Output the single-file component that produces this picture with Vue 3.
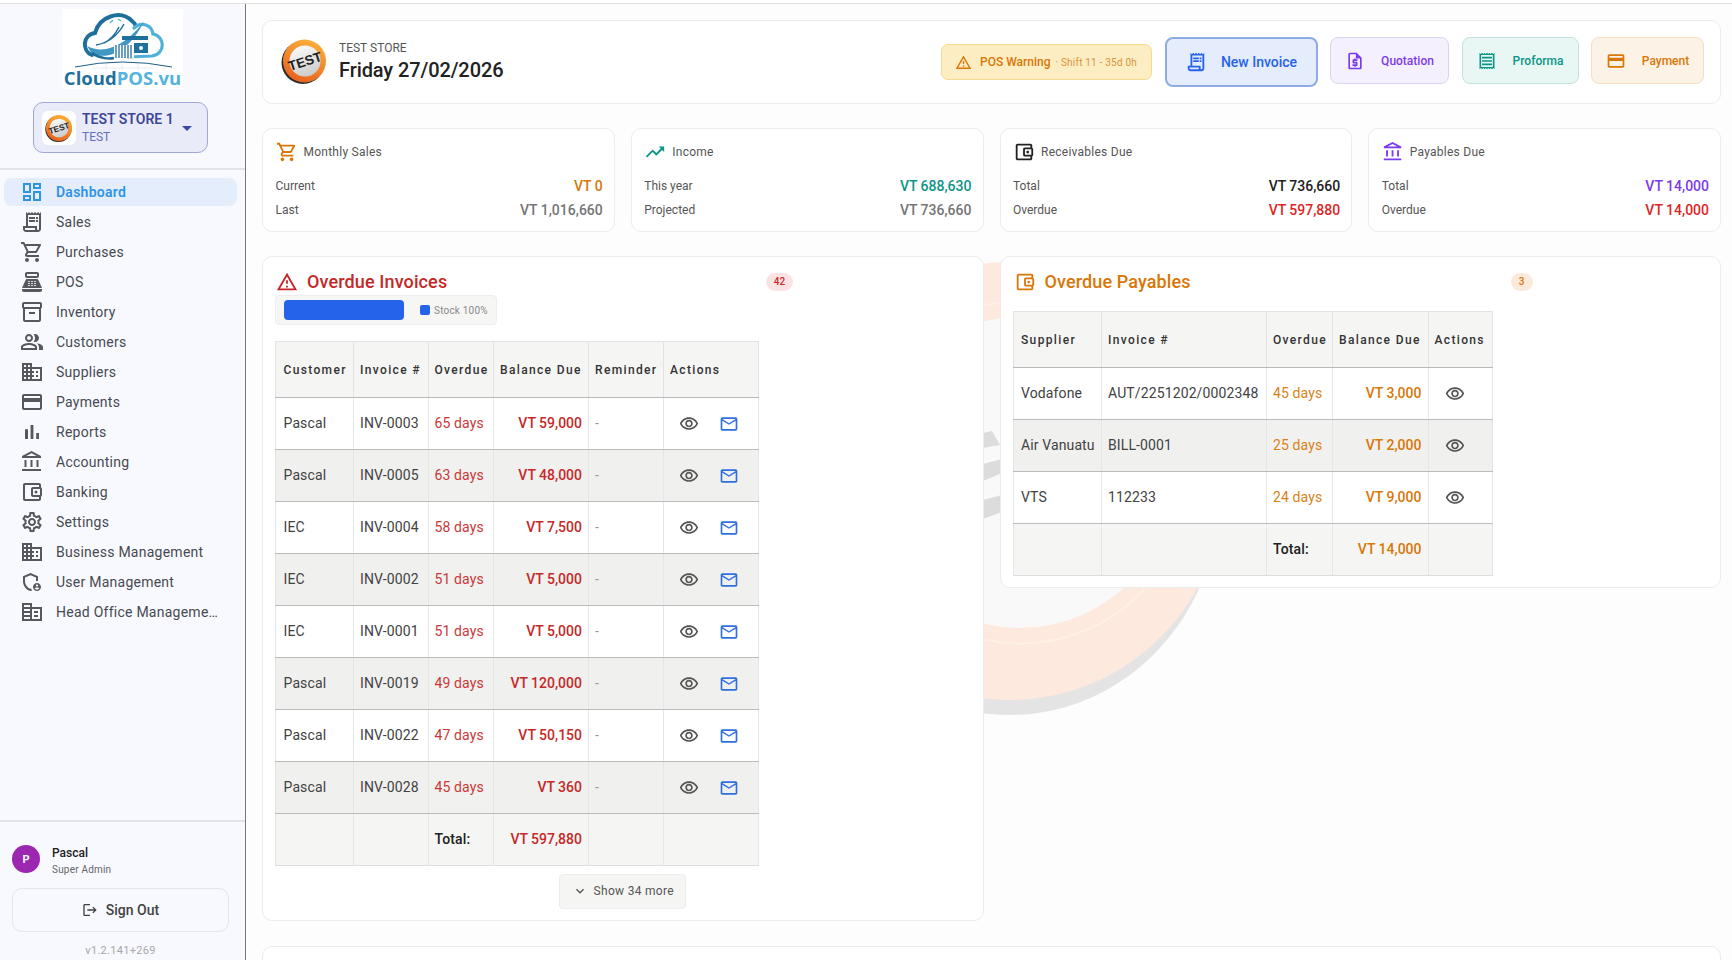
<template>
  <div class="page">
    <div class="top-strip"></div>
    <div class="shell">
      <!-- Sidebar -->
      <aside class="sidebar">
        <div class="brand">
          <div class="brand-box">
            <svg class="brand-logo" viewBox="0 0 121 62">
              <path d="M30 46C20 42 20 26 33 24C37 8 58 0 70 12C72 13.500 73 15 74 17" fill="none" stroke="#1f6f9c" stroke-width="4" stroke-linecap="round" />
              <path d="M72 19C79 12 90 16 91 25C103 27 104 45 90 47L66 48" fill="none" stroke="#4fb2d9" stroke-width="3.200" stroke-linecap="round" />
              <path d="M25 37C44 47 66 34 82 12C70 38 50 52 30 45Z" fill="#3f97c4" />
              <path d="M34 36C46 34 56 26 62 15M42 34C50 30 54 24 57 18" fill="none" stroke="#1f6f9c" stroke-width="1.500" />
              <path d="M48 14l3-3M56 10l3 2" fill="none" stroke="#4fb2d9" stroke-width="1.200" />
              <path d="M30 44C38 50 48 50 52 49" fill="none" stroke="#1f6f9c" stroke-width="2.400" />
              <rect x="60" y="27" width="26" height="4" fill="#1f6f9c" />
              <rect x="52" y="36" width="20" height="13" fill="#fff" />
              <path d="M54 36v13M57 36v13M60 36v13M63 36v13M66 36v13M69 36v13" stroke="#1f6f9c" stroke-width="1.300" />
              <rect x="72" y="34" width="14" height="10" fill="#1f6f9c" />
              <circle cx="79" cy="39" r="2" fill="#fff" />
              <path d="M13 58Q60 48 110 58" fill="none" stroke="#1f5f85" stroke-width="1" />
              <path d="M30 59H92M44 55V62M60 54V62M76 55V62" stroke="#dfe8ee" stroke-width="0.800" />
            </svg>
            <div class="brand-name"><span>Cloud</span><span class="brand-pos">POS.vu</span></div>
          </div>
        </div>

        <div class="store-select">
          <div class="store-logo">
            <svg viewBox="0 0 48 48" class="test-logo-small">
              <defs>
                <linearGradient id="ringGrad" x1="0.700" y1="0" x2="0.300" y2="1">
                  <stop offset="0" stop-color="#fbb13a" />
                  <stop offset="1" stop-color="#e8601e" />
                </linearGradient>
                <linearGradient id="discGrad" x1="0.300" y1="0" x2="0.700" y2="1">
                  <stop offset="0" stop-color="#fbfbfb" />
                  <stop offset="1" stop-color="#c9c9c9" />
                </linearGradient>
              </defs>
              <circle cx="23" cy="25.500" r="21" fill="#2b2b2b" />
              <circle cx="24" cy="24" r="21" fill="url(#ringGrad)" />
              <circle cx="24" cy="24" r="15" fill="url(#discGrad)" />
              <text x="24" y="29" text-anchor="middle" transform="rotate(-18 24 24)" class="test-text">TEST</text>
            </svg>
          </div>
          <div class="store-names">
            <div class="store-name">TEST STORE 1</div>
            <div class="store-sub">TEST</div>
          </div>
          <svg class="store-arrow" viewBox="0 0 24 24"><path d="M6 9.500l6 6 6-6z" /></svg>
        </div>

        <nav class="nav">
          <a v-for="item in navItems" :key="item.label" class="nav-item" :class="{ active: item.active }">
            <svg class="nav-icon" viewBox="0 0 24 24"><path :d="item.icon" /></svg>
            <span class="nav-label">{{ item.label }}</span>
          </a>
        </nav>

        <div class="side-footer">
          <div class="user-row">
            <div class="avatar">P</div>
            <div>
              <div class="user-name">Pascal</div>
              <div class="user-role">Super Admin</div>
            </div>
          </div>
          <button class="signout">
            <svg viewBox="0 0 24 24"><path :d="icons.logout" /></svg>
            Sign Out
          </button>
          <div class="version">v1.2.141+269</div>
        </div>
      </aside>

      <!-- Main -->
      <main class="main">
        <svg class="watermark" viewBox="0 0 480 500">
          <ellipse cx="240" cy="256" rx="210" ry="224" fill="#e4e4e4" />
          <ellipse cx="240" cy="246" rx="215" ry="219" fill="#fde9de" />
          <ellipse cx="250" cy="237.500" rx="170" ry="171" fill="none" stroke="#fef0e6" stroke-width="2" />
          <ellipse cx="250" cy="237.500" rx="155" ry="155.500" fill="#f9f9f9" />
          <polygon points="213,198 222,196 230,210 213,213" fill="#dcdcdc" />
          <polygon points="213,229 232,224 232,238 213,246" fill="#dcdcdc" />
          <polygon points="213,265 232,260 232,277 213,284" fill="#dcdcdc" />
        </svg>

        <section class="card head-card">
          <div class="head-left">
            <svg viewBox="0 0 48 48" class="test-logo">
              <circle cx="23" cy="25.500" r="21.500" fill="#2b2b2b" />
              <circle cx="24.500" cy="24" r="21.500" fill="url(#ringGrad)" />
              <circle cx="25" cy="24" r="15.500" fill="url(#discGrad)" />
              <text x="25" y="29" text-anchor="middle" transform="rotate(-18 25 24)" class="test-text">TEST</text>
            </svg>
            <div>
              <div class="head-store">TEST STORE</div>
              <div class="head-date">Friday 27/02/2026</div>
            </div>
          </div>
          <div class="head-actions">
            <div class="pos-warning">
              <svg viewBox="0 0 24 24"><path :d="icons.warning" /></svg>
              <span class="pos-title">POS Warning</span>
              <span class="pos-sub">· Shift 11 - 35d 0h</span>
            </div>
            <button class="action primary">
              <svg viewBox="0 0 24 24"><path :d="icons.receiptLong" /></svg>
              New Invoice
            </button>
            <button class="action quotation">
              <svg viewBox="0 0 24 24"><path :d="icons.quote" /></svg>
              Quotation
            </button>
            <button class="action proforma">
              <svg viewBox="0 0 24 24"><path :d="icons.receipt" /></svg>
              Proforma
            </button>
            <button class="action payment">
              <svg viewBox="0 0 24 24"><path :d="icons.card" /></svg>
              Payment
            </button>
          </div>
        </section>

        <section class="stats">
          <div v-for="s in stats" :key="s.title" class="card stat">
            <div class="stat-head">
              <svg :style="{ fill: s.color }" viewBox="0 0 24 24"><path :d="s.icon" /></svg>
              <span>{{ s.title }}</span>
            </div>
            <div class="stat-row">
              <span>{{ s.label1 }}</span>
              <b :style="{ color: s.color1 }">{{ s.value1 }}</b>
            </div>
            <div class="stat-row">
              <span>{{ s.label2 }}</span>
              <b :style="{ color: s.color2 }">{{ s.value2 }}</b>
            </div>
          </div>
        </section>

        <section class="lists">
          <!-- Overdue invoices -->
          <div class="card list-card invoices">
            <div class="list-head">
              <svg class="red" viewBox="0 0 24 24"><path :d="icons.warning" /></svg>
              <h2 class="red">Overdue Invoices</h2>
              <span class="badge badge-red">42</span>
            </div>
            <div class="stock-pill">
              <div class="stock-bar"></div>
              <i class="stock-dot"></i>
              <span>Stock 100%</span>
            </div>
            <table class="inv-table">
              <colgroup>
                <col style="width: 78px" />
                <col style="width: 74.500px" />
                <col style="width: 65.500px" />
                <col style="width: 95px" />
                <col style="width: 75px" />
                <col style="width: 94.500px" />
              </colgroup>
              <thead>
                <tr>
                  <th>Customer</th>
                  <th>Invoice #</th>
                  <th>Overdue</th>
                  <th>Balance Due</th>
                  <th>Reminder</th>
                  <th>Actions</th>
                </tr>
              </thead>
              <tbody>
                <tr v-for="row in invoices" :key="row.no">
                  <td>{{ row.customer }}</td>
                  <td>{{ row.no }}</td>
                  <td class="days red">{{ row.days }}</td>
                  <td class="money red">{{ row.balance }}</td>
                  <td class="dash">-</td>
                  <td class="acts">
                    <span class="icon-btn"><svg viewBox="0 0 24 24" class="eye"><path :d="icons.eye" /></svg></span>
                    <span class="icon-btn"><svg viewBox="0 0 24 24" class="mail"><path :d="icons.mail" /></svg></span>
                  </td>
                </tr>
                <tr class="total">
                  <td></td>
                  <td></td>
                  <td class="total-label">Total:</td>
                  <td class="money red">VT 597,880</td>
                  <td></td>
                  <td></td>
                </tr>
              </tbody>
            </table>
            <div class="more-wrap">
              <button class="more">
                <svg viewBox="0 0 24 24"><path :d="icons.expand" /></svg>
                Show 34 more
              </button>
            </div>
          </div>

          <!-- Overdue payables -->
          <div class="card list-card payables">
            <div class="list-head">
              <svg class="orange" viewBox="0 0 24 24"><path :d="icons.wallet" /></svg>
              <h2 class="orange">Overdue Payables</h2>
              <span class="badge badge-orange">3</span>
            </div>
            <table class="pay-table">
              <colgroup>
                <col style="width: 88.500px" />
                <col style="width: 165px" />
                <col style="width: 66px" />
                <col style="width: 95.500px" />
                <col style="width: 64.500px" />
              </colgroup>
              <thead>
                <tr>
                  <th>Supplier</th>
                  <th>Invoice #</th>
                  <th>Overdue</th>
                  <th>Balance Due</th>
                  <th>Actions</th>
                </tr>
              </thead>
              <tbody>
                <tr v-for="row in payables" :key="row.no">
                  <td>{{ row.supplier }}</td>
                  <td>{{ row.no }}</td>
                  <td class="days orange">{{ row.days }}</td>
                  <td class="money orange">{{ row.balance }}</td>
                  <td class="acts">
                    <span class="icon-btn"><svg viewBox="0 0 24 24" class="eye"><path :d="icons.eye" /></svg></span>
                  </td>
                </tr>
                <tr class="total">
                  <td></td>
                  <td></td>
                  <td class="total-label">Total:</td>
                  <td class="money orange">VT 14,000</td>
                  <td></td>
                </tr>
              </tbody>
            </table>
          </div>
        </section>

        <section class="card next-card"></section>
      </main>
    </div>
  </div>
</template>

<script setup>
const icons = {
  dashboard: 'M19 5v2h-4V5h4M9 5v6H5V5h4m10 8v6h-4v-6h4M9 17v2H5v-2h4M21 3h-8v6h8V3zM11 3H3v10h8V3zm10 8h-8v10h8V11zm-10 4H3v6h8v-6z',
  receiptLong: 'M19.500 3.500 18 2l-1.500 1.500L15 2l-1.500 1.500L12 2l-1.500 1.500L9 2 7.500 3.500 6 2v14H3v3c0 1.660 1.340 3 3 3h12c1.660 0 3-1.340 3-3V2l-1.500 1.500zM15 20H6c-.550 0-1-.450-1-1v-1h10v2zm4-1c0 .550-.450 1-1 1s-1-.450-1-1v-3H8V5h11v14zM9 7h6v2H9zM16 7h2v2h-2zM9 10h6v2H9zM16 10h2v2h-2z',
  cart: 'M15.550 13c.750 0 1.410-.410 1.750-1.030l3.580-6.490c.370-.660-.110-1.480-.870-1.480H5.210l-.940-2H1v2h2l3.600 7.590-1.350 2.440C4.520 15.370 5.480 17 7 17h12v-2H7l1.100-2h7.450zM6.160 6h12.150l-2.760 5H8.530L6.160 6zM7 18c-1.100 0-1.990.900-1.990 2S5.900 22 7 22s2-.900 2-2-.900-2-2-2zm10 0c-1.100 0-1.990.900-1.990 2s.890 2 1.990 2 2-.900 2-2-.900-2-2-2z',
  pos: 'M17 2H7c-1.100 0-2 .900-2 2v2c0 1.100.900 2 2 2h10c1.100 0 2-.900 2-2V4c0-1.100-.900-2-2-2zm0 4H7V4h10v2zm3 16H4c-1.100 0-2-.900-2-2v-1h20v1c0 1.100-.900 2-2 2zm-1.470-11.810C18.210 9.470 17.490 9 16.700 9H7.300c-.790 0-1.510.470-1.830 1.190L2 18h20l-3.470-7.810zM9.500 16h-1c-.280 0-.500-.220-.500-.500s.220-.500.500-.500h1c.280 0 .500.220.500.500s-.220.500-.500.500zm0-2h-1c-.280 0-.500-.220-.500-.500s.220-.500.500-.500h1c.280 0 .500.220.500.500s-.220.500-.500.500zm0-2h-1c-.280 0-.500-.220-.500-.500s.220-.500.500-.500h1c.280 0 .500.220.500.500s-.220.500-.500.500zm3 4h-1c-.280 0-.500-.220-.500-.500s.220-.500.500-.500h1c.280 0 .500.220.500.500s-.220.500-.500.500zm0-2h-1c-.280 0-.500-.220-.500-.500s.220-.500.500-.500h1c.280 0 .500.220.500.500s-.220.500-.500.500zm0-2h-1c-.280 0-.500-.220-.500-.500s.220-.500.500-.500h1c.280 0 .500.220.500.500s-.220.500-.500.500zm3 4h-1c-.280 0-.500-.220-.500-.500s.220-.500.500-.500h1c.280 0 .500.220.500.500s-.220.500-.500.500zm0-2h-1c-.280 0-.500-.220-.500-.500s.220-.500.500-.500h1c.280 0 .500.220.500.500s-.220.500-.500.500zm0-2h-1c-.280 0-.500-.220-.500-.500s.220-.500.500-.500h1c.280 0 .500.220.500.500s-.220.500-.500.500z',
  inventory: 'M20 2H4c-1 0-2 .900-2 2v3.010c0 .720.430 1.340 1 1.690V20c0 1.100 1.100 2 2 2h14c.900 0 2-.900 2-2V8.700c.570-.350 1-.970 1-1.690V4c0-1.100-1-2-2-2zm-1 18H5V9h14v11zm1-13H4V4h16v3zM9 12h6v2H9z',
  people: 'M16.670 13.130C18.040 14.060 19 15.320 19 17v3h4v-3c0-2.180-3.570-3.470-6.330-3.870zM15 12c2.210 0 4-1.790 4-4s-1.790-4-4-4c-.470 0-.910.100-1.330.240C14.500 5.270 15 6.580 15 8s-.500 2.730-1.330 3.760c.420.140.860.240 1.330.240zM9 12c2.210 0 4-1.790 4-4s-1.790-4-4-4-4 1.790-4 4 1.790 4 4 4zm0-6c1.100 0 2 .900 2 2s-.900 2-2 2-2-.900-2-2 .900-2 2-2zM9 13c-2.670 0-8 1.340-8 4v3h16v-3c0-2.660-5.330-4-8-4zm6 5H3v-.990C3.200 16.290 6.300 15 9 15s5.800 1.290 6 2v1z',
  domain: 'M12 7V3H2v18h20V7H12zM6 19H4v-2h2v2zm0-4H4v-2h2v2zm0-4H4V9h2v2zm0-4H4V5h2v2zm4 12H8v-2h2v2zm0-4H8v-2h2v2zm0-4H8V9h2v2zm0-4H8V5h2v2zm10 12h-8v-2h2v-2h-2v-2h2v-2h-2V9h8v10zm-2-8h-2v2h2v-2zm0 4h-2v2h2v-2z',
  card: 'M20 4H4c-1.110 0-1.990.890-1.990 2L2 18c0 1.110.890 2 2 2h16c1.110 0 2-.890 2-2V6c0-1.110-.890-2-2-2zm0 14H4v-6h16v6zm0-10H4V6h16v2z',
  bars: 'M5 9.200h3V19H5zM10.600 5h2.800v14h-2.800zm5.600 8H19v6h-2.800z',
  bank: 'M6.500 10h-2v7h2v-7zm6 0h-2v7h2v-7zm8.500 9H2v2h19v-2zm-2.500-9h-2v7h2v-7zm-7-6.740L16.710 6H6.290l5.210-2.740m0-2.260L2 6v2h19V6l-9.500-5z',
  wallet: 'M21 7.280V5c0-1.100-.900-2-2-2H5c-1.110 0-2 .900-2 2v14c0 1.100.890 2 2 2h14c1.100 0 2-.900 2-2v-2.280c.590-.350 1-.980 1-1.720V9c0-.740-.410-1.380-1-1.720zM20 9v6h-7V9h7zM5 19V5h14v2h-6c-1.100 0-2 .900-2 2v6c0 1.100.900 2 2 2h6v2H5zM16 13.500a1.500 1.500 0 100-3 1.500 1.500 0 000 3z',
  settings: 'M19.430 12.980c.040-.320.070-.640.070-.980 0-.340-.030-.660-.070-.980l2.110-1.650c.190-.150.240-.420.120-.640l-2-3.460c-.090-.160-.260-.250-.440-.250-.060 0-.120.010-.170.030l-2.490 1c-.520-.400-1.080-.730-1.690-.980l-.380-2.650C14.460 2.180 14.250 2 14 2h-4c-.250 0-.460.180-.490.420l-.380 2.650c-.610.250-1.170.590-1.690.980l-2.490-1c-.060-.020-.120-.030-.180-.030-.170 0-.340.090-.430.250l-2 3.460c-.130.220-.070.490.120.640l2.110 1.650c-.040.320-.070.650-.070.980 0 .330.030.660.070.980l-2.110 1.650c-.190.150-.240.420-.120.640l2 3.460c.090.160.260.250.440.250.060 0 .120-.010.170-.030l2.490-1c.520.400 1.080.730 1.690.980l.380 2.650c.030.240.240.420.490.420h4c.250 0 .460-.180.490-.420l.380-2.650c.610-.250 1.170-.590 1.690-.980l2.490 1c.060.020.120.030.180.030.170 0 .340-.090.430-.250l2-3.460c.120-.220.070-.490-.120-.640l-2.110-1.650zm-1.980-1.710c.040.310.050.520.050.730 0 .210-.020.430-.050.730l-.140 1.130.890.700 1.080.840-.700 1.210-1.270-.510-1.040-.420-.900.680c-.430.320-.840.560-1.250.730l-1.060.430-.160 1.130-.200 1.350h-1.400l-.190-1.350-.160-1.130-1.060-.430c-.430-.180-.830-.410-1.230-.710l-.910-.700-1.060.430-1.270.510-.700-1.210 1.080-.840.890-.700-.140-1.130c-.030-.310-.050-.540-.050-.740s.020-.430.050-.730l.140-1.130-.890-.700-1.080-.840.700-1.210 1.270.510 1.040.420.900-.680c.430-.320.840-.560 1.250-.730l1.060-.430.160-1.130.200-1.350h1.390l.190 1.350.160 1.130 1.060.430c.430.180.830.410 1.230.710l.910.700 1.060-.430 1.270-.510.700 1.210-1.070.850-.890.700.140 1.130zM12 8c-2.210 0-4 1.790-4 4s1.790 4 4 4 4-1.790 4-4-1.790-4-4-4zm0 6c-1.100 0-2-.900-2-2s.900-2 2-2 2 .900 2 2-.900 2-2 2z',
  admin: 'M18 11.090V6.270L10.500 3 3 6.270v4.910c0 4.540 3.200 8.790 7.500 9.820.550-.130 1.080-.320 1.600-.550-.450-.620-.780-1.320-.950-2.070l-.650.400c-3.200-1-5.500-4.500-5.500-7.600V7.600l5.500-2.400 5.500 2.400v3.700c.660-.200 1.320-.280 2-.210zM17 13c-2.210 0-4 1.790-4 4s1.790 4 4 4 4-1.790 4-4-1.790-4-4-4zm0 1.380c.620 0 1.120.510 1.120 1.120s-.510 1.120-1.120 1.120-1.120-.510-1.120-1.120.500-1.120 1.120-1.120zm0 5.370c-.930 0-1.740-.460-2.240-1.170.050-.720 1.510-1.080 2.240-1.080s2.190.360 2.240 1.080c-.500.710-1.310 1.170-2.240 1.170z',
  office: 'M12 7V3H2v18h20V7H12zm-2 12H4v-2h6v2zm0-4H4v-2h6v2zm0-4H4V9h6v2zm0-4H4V5h6v2zm10 12h-8V9h8v10zm-2-8h-4v2h4v-2zm0 4h-4v2h4v-2z',
  warning: 'M12 5.990 19.530 19H4.470L12 5.990M12 2 1 21h22L12 2zm1 14h-2v2h2v-2zm0-6h-2v4h2v-4z',
  trend: 'M16 6l2.290 2.290-4.880 4.880-4-4L2 16.590 3.410 18l6-6 4 4 6.300-6.290L22 12V6z',
  quote: 'M14 2H6c-1.100 0-2 .900-2 2v16c0 1.100.890 2 1.990 2H18c1.100 0 2-.900 2-2V8l-6-6zM18 20H6V4h7v5h5v11zM11 19h2v-1h1c.550 0 1-.450 1-1v-3c0-.550-.450-1-1-1h-3v-1h4v-2h-2V9h-2v1h-1c-.550 0-1 .450-1 1v3c0 .550.450 1 1 1h3v1H9v2h2v1z',
  receipt: 'M19.500 3.500 18 2l-1.500 1.500L15 2l-1.500 1.500L12 2l-1.500 1.500L9 2 7.500 3.500 6 2 4.500 3.500 3 2v20l1.500-1.500L6 22l1.500-1.500L9 22l1.500-1.500L12 22l1.500-1.500L15 22l1.500-1.500L18 22l1.500-1.500L21 22V2l-1.500 1.500zM19 19.090H5V4.910h14v14.180zM6 15h12v2H6zm0-4h12v2H6zm0-4h12v2H6z',
  eye: 'M12 6c3.790 0 7.170 2.130 8.820 5.500C19.170 14.870 15.790 17 12 17s-7.170-2.130-8.820-5.500C4.830 8.130 8.210 6 12 6m0-2C7 4 2.730 7.110 1 11.500 2.730 15.890 7 19 12 19s9.270-3.110 11-7.500C21.270 7.110 17 4 12 4zm0 5c1.380 0 2.500 1.120 2.500 2.500S13.380 14 12 14s-2.500-1.120-2.500-2.500S10.620 9 12 9m0-2c-2.480 0-4.500 2.020-4.500 4.500S9.520 16 12 16s4.500-2.020 4.500-4.500S14.480 7 12 7z',
  mail: 'M22 6c0-1.100-.900-2-2-2H4c-1.100 0-2 .900-2 2v12c0 1.100.900 2 2 2h16c1.100 0 2-.900 2-2V6zm-2 0l-8 5-8-5h16zm0 12H4V8l8 5 8-5v10z',
  logout: 'M17 7l-1.410 1.410L18.170 11H8v2h10.170l-2.580 2.580L17 17l5-5zM4 5h8V3H4c-1.100 0-2 .900-2 2v14c0 1.100.900 2 2 2h8v-2H4V5z',
  expand: 'M16.590 8.590 12 13.170 7.410 8.590 6 10l6 6 6-6z',
}

const navItems = [
  { label: 'Dashboard', icon: icons.dashboard, active: true },
  { label: 'Sales', icon: icons.receiptLong },
  { label: 'Purchases', icon: icons.cart },
  { label: 'POS', icon: icons.pos },
  { label: 'Inventory', icon: icons.inventory },
  { label: 'Customers', icon: icons.people },
  { label: 'Suppliers', icon: icons.domain },
  { label: 'Payments', icon: icons.card },
  { label: 'Reports', icon: icons.bars },
  { label: 'Accounting', icon: icons.bank },
  { label: 'Banking', icon: icons.wallet },
  { label: 'Settings', icon: icons.settings },
  { label: 'Business Management', icon: icons.domain },
  { label: 'User Management', icon: icons.admin },
  { label: 'Head Office Manageme…', icon: icons.office },
]

const stats = [
  { title: 'Monthly Sales', icon: icons.cart, color: '#d97706', label1: 'Current', value1: 'VT 0', color1: '#d97706', label2: 'Last', value2: 'VT 1,016,660', color2: '#757575' },
  { title: 'Income', icon: icons.trend, color: '#0d9488', label1: 'This year', value1: 'VT 688,630', color1: '#0d9488', label2: 'Projected', value2: 'VT 736,660', color2: '#757575' },
  { title: 'Receivables Due', icon: icons.wallet, color: '#212121', label1: 'Total', value1: 'VT 736,660', color1: '#212121', label2: 'Overdue', value2: 'VT 597,880', color2: '#dc2626' },
  { title: 'Payables Due', icon: icons.bank, color: '#7c3aed', label1: 'Total', value1: 'VT 14,000', color1: '#7c3aed', label2: 'Overdue', value2: 'VT 14,000', color2: '#dc2626' },
]

const invoices = [
  { customer: 'Pascal', no: 'INV-0003', days: '65 days', balance: 'VT 59,000' },
  { customer: 'Pascal', no: 'INV-0005', days: '63 days', balance: 'VT 48,000' },
  { customer: 'IEC', no: 'INV-0004', days: '58 days', balance: 'VT 7,500' },
  { customer: 'IEC', no: 'INV-0002', days: '51 days', balance: 'VT 5,000' },
  { customer: 'IEC', no: 'INV-0001', days: '51 days', balance: 'VT 5,000' },
  { customer: 'Pascal', no: 'INV-0019', days: '49 days', balance: 'VT 120,000' },
  { customer: 'Pascal', no: 'INV-0022', days: '47 days', balance: 'VT 50,150' },
  { customer: 'Pascal', no: 'INV-0028', days: '45 days', balance: 'VT 360' },
]

const payables = [
  { supplier: 'Vodafone', no: 'AUT/2251202/0002348', days: '45 days', balance: 'VT 3,000' },
  { supplier: 'Air Vanuatu', no: 'BILL-0001', days: '25 days', balance: 'VT 2,000' },
  { supplier: 'VTS', no: '112233', days: '24 days', balance: 'VT 9,000' },
]
</script>

<style>
html,
body {
  margin: 0;
  overflow: hidden;
  background: #fff;
}
</style>

<style scoped>
.page {
  width: 1732px;
  height: 960px;
  overflow: hidden;
  font-family: Roboto, "Liberation Sans", sans-serif;
  color: #212121;
  background: #fdfdfd;
}

.top-strip {
  height: 3px;
  background: #fff;
  border-bottom: 1px solid #e0e0e0;
}

.shell {
  display: flex;
  height: 956px;
}

/* Sidebar */
.sidebar {
  width: 245px;
  flex-shrink: 0;
  display: flex;
  flex-direction: column;
  background: #f8f9ff;
  border-right: 1.500px solid #77787c;
  box-sizing: content-box;
}

.brand {
  display: flex;
  justify-content: center;
  padding-top: 5px;
}

.brand-box {
  width: 121px;
  height: 80px;
  background: #fff;
}

.brand-logo {
  width: 121px;
  height: 62px;
  display: block;
}

.brand-name {
  margin-top: -2px;
  text-align: center;
  font-family: "Open Sans", sans-serif;
  font-size: 18.500px;
  font-weight: 700;
  line-height: 18px;
  white-space: nowrap;
  color: #1f6f9c;
}

.brand-pos {
  color: #55b3dc;
}

.store-select {
  margin: 13px 37px 15px 33px;
  height: 51px;
  display: flex;
  align-items: center;
  box-sizing: border-box;
  padding: 0 8px;
  background: #e9ebf8;
  border: 1px solid #a0a8d8;
  border-radius: 10px;
}

.store-logo {
  width: 34px;
  height: 34px;
  background: #fff;
  border-radius: 6px;
  display: flex;
  align-items: center;
  justify-content: center;
  margin-right: 6px;
}

.test-logo-small {
  width: 30px;
  height: 30px;
}

.test-text {
  font-family: "Liberation Sans", sans-serif;
  font-size: 13.500px;
  font-weight: 700;
  fill: #222;
}

.store-names {
  flex: 1;
}

.store-name {
  font-size: 14px;
  font-weight: 600;
  line-height: 17px;
  color: #3c4798;
}

.store-sub {
  font-size: 12px;
  line-height: 15px;
  margin-top: 2px;
  color: #6470bb;
}

.store-arrow {
  width: 20px;
  height: 20px;
  fill: #3949ab;
  margin-right: 2px;
}

.nav {
  border-top: 2px solid #e2e3ea;
  padding-top: 8px;
  display: flex;
  flex-direction: column;
  gap: 2px;
}

.nav-item {
  height: 28px;
  margin: 0 8px 0 4px;
  padding-left: 16px;
  display: flex;
  align-items: center;
  border-radius: 8px;
  color: #474a50;
  font-size: 14px;
  letter-spacing: 0.250px;
}

.nav-item.active {
  background: #e3edfc;
  color: #2f93e6;
  font-weight: 600;
}

.nav-icon {
  width: 24px;
  height: 24px;
  flex-shrink: 0;
  fill: #55585e;
  margin-right: 12px;
}

.nav-item.active .nav-icon {
  fill: #2f93e6;
}

.nav-label {
  white-space: nowrap;
}

.side-footer {
  margin-top: auto;
  border-top: 2px solid #e2e3ea;
  padding: 23px 16px 0 12px;
  height: 140px;
  box-sizing: border-box;
}

.user-row {
  display: flex;
  align-items: center;
  gap: 12px;
  height: 28px;
}

.avatar {
  width: 28px;
  height: 28px;
  border-radius: 50%;
  background: #9c27b0;
  color: #fff;
  display: flex;
  align-items: center;
  justify-content: center;
  font-size: 11px;
  font-weight: 700;
}

.user-name {
  font-size: 12px;
  font-weight: 500;
  line-height: 15px;
  margin-top: 4px;
}

.user-role {
  font-size: 10px;
  line-height: 13px;
  margin-top: 2px;
  letter-spacing: 0.200px;
  color: #666;
}

.signout {
  margin-top: 15px;
  width: 217px;
  height: 44px;
  display: flex;
  align-items: center;
  justify-content: center;
  gap: 8px;
  background: transparent;
  border: 1.500px solid #e3e4ec;
  border-radius: 10px;
  font: 500 14px Roboto, sans-serif;
  color: #424242;
}

.signout svg {
  width: 16px;
  height: 16px;
  fill: #424242;
}

.version {
  width: 217px;
  margin-top: 12px;
  text-align: center;
  font-size: 11px;
  line-height: 13px;
  letter-spacing: 0.300px;
  color: #a6a6a6;
}

/* Main */
.main {
  position: relative;
  flex: 1;
  min-width: 0;
  padding: 16px 11px 0 16px;
  overflow: hidden;
}

.watermark {
  position: absolute;
  left: 524px;
  top: 231px;
  width: 480px;
  height: 500px;
}

.card {
  position: relative;
  background: #fff;
  border: 1px solid #ececec;
  border-radius: 10px;
  box-sizing: border-box;
}

.head-card {
  height: 84px;
  display: flex;
  align-items: center;
  justify-content: space-between;
  padding: 0 16px 0 17px;
}

.head-left {
  display: flex;
  align-items: center;
  gap: 11px;
  margin-top: -2px;
}

.test-logo {
  width: 48px;
  height: 48px;
}

.head-store {
  font-size: 12px;
  line-height: 16px;
  color: #555;
}

.head-date {
  font-size: 20px;
  font-weight: 500;
  line-height: 26px;
  margin-top: 1px;
  letter-spacing: -0.100px;
}

.head-actions {
  display: flex;
  align-items: flex-start;
  gap: 12.500px;
}

.pos-warning {
  width: 211px;
  height: 36px;
  margin-top: 7px;
  display: flex;
  align-items: center;
  box-sizing: border-box;
  padding-left: 13px;
  background: #fdedc3;
  border: 1px solid #f5d98f;
  border-radius: 7px;
  color: #d97706;
}

.pos-warning svg {
  width: 17px;
  height: 17px;
  fill: #d97706;
  margin-right: 8px;
}

.pos-title {
  font-size: 12px;
  font-weight: 500;
}

.pos-sub {
  font-size: 10px;
  letter-spacing: 0.200px;
  margin-left: 5px;
  color: #d9933a;
}

.action {
  display: flex;
  align-items: center;
  height: 47px;
  padding: 0;
  justify-content: center;
  gap: 16px;
  box-sizing: border-box;
  border-radius: 8px;
  border: 1px solid;
  font: 500 12px Roboto, sans-serif;
}

.action svg {
  width: 20px;
  height: 20px;
  fill: currentColor;
}

.action.primary {
  width: 153px;
  height: 50px;
  gap: 14px;
  font-size: 14px;
  color: #2563eb;
  background: #e5edfd;
  border: 2px solid #8fabe4;
}

.action.primary svg {
  width: 22px;
  height: 22px;
}

.action.quotation {
  width: 119px;
  color: #7c3aed;
  background: #f5f0fe;
  border-color: #ddd3f4;
}

.action.proforma {
  width: 117px;
  color: #0d9488;
  background: #e8f7f4;
  border-color: #c0e4dd;
}

.action.payment {
  width: 113px;
  color: #d97706;
  background: #fdf2e6;
  border-color: #f5dfc4;
}

.stats {
  margin-top: 24px;
  display: grid;
  grid-template-columns: repeat(4, 1fr);
  gap: 16px;
}

.stat {
  height: 104px;
  padding: 0 11px 0 12.500px;
}

.stat-head {
  height: 45px;
  display: flex;
  align-items: center;
  gap: 6px;
  font-size: 12px;
  letter-spacing: 0.250px;
  color: #555;
  box-sizing: border-box;
}

.stat-head svg {
  width: 22px;
  height: 22px;
}

.stat-row {
  height: 24px;
  display: flex;
  align-items: center;
  justify-content: space-between;
  font-size: 12px;
  color: #555;
}

.stat-row b {
  font-size: 14px;
  font-weight: 500;
}

.lists {
  margin-top: 24px;
  display: grid;
  grid-template-columns: repeat(2, 1fr);
  gap: 16px;
  align-items: start;
}

.list-card {
  padding: 0 12px;
}

.invoices {
  height: 665px;
}

.payables {
  height: 331.500px;
}

.list-head {
  width: 518px;
  height: 49px;
  display: flex;
  align-items: center;
  box-sizing: border-box;
}

.payables .list-head {
  width: 520px;
}

.invoices .list-head {
  height: 38px;
  padding-top: 11px;
}

.list-head svg {
  width: 22px;
  height: 22px;
  margin: 0 9px 0 1px;
  flex-shrink: 0;
}

.list-head h2 {
  margin: 0;
  flex: 1;
  font-size: 18px;
  font-weight: 500;
  letter-spacing: 0.120px;
}

.red {
  color: #c62828;
  fill: #c62828;
}

.orange {
  color: #d97706;
  fill: #d97706;
}

.badge {
  height: 18px;
  display: flex;
  align-items: center;
  justify-content: center;
  box-sizing: border-box;
  border-radius: 9px;
  font-size: 10px;
  font-weight: 500;
}

.badge-red {
  width: 27px;
  background: #fbe3e3;
  color: #c62828;
}

.badge-orange {
  width: 22px;
  background: #fbeadb;
  color: #d97706;
}

.stock-pill {
  width: 222px;
  height: 30px;
  display: flex;
  align-items: center;
  box-sizing: border-box;
  padding-left: 8px;
  background: #f6f6f5;
  border: 1px solid #eeeeee;
  border-radius: 4px;
  font-size: 10px;
  letter-spacing: 0.200px;
  color: #8a8a8a;
}

.stock-bar {
  width: 120px;
  height: 20px;
  background: #2563eb;
  border-radius: 4px;
}

.stock-dot {
  width: 10px;
  height: 10px;
  margin: 0 4px 0 16px;
  background: #2563eb;
  border-radius: 2px;
}

table {
  table-layout: fixed;
  border-collapse: collapse;
  font-size: 14px;
  letter-spacing: 0.120px;
  color: #424242;
}

.inv-table {
  width: 482.500px;
  margin-top: 16px;
}

.pay-table {
  width: 479.500px;
  margin-top: 5px;
}

th {
  height: 55px;
  padding: 0 6px;
  text-align: left;
  font-size: 12px;
  font-weight: 500;
  letter-spacing: 1.350px;
  white-space: nowrap;
  color: #333;
  background: #f5f5f4;
  border: 1px solid #e3e3e3;
  border-bottom: 1.500px solid #b9b9b9;
}

td {
  height: 49px;
  padding: 0 6px 2px;
  white-space: nowrap;
  border-left: 1px solid #e6e6e6;
  border-right: 1px solid #e6e6e6;
  border-bottom: 1.500px solid #bcbcbc;
}

th:first-child,
td:first-child {
  padding-left: 7.500px;
}

tbody tr:nth-child(even) td {
  background: #f0f0ef;
}

tr.total td {
  background: #f5f5f4 !important;
  border-bottom: 1px solid #dedede;
}

.total-label {
  font-weight: 500;
  color: #212121;
}

.days {
  font-weight: 400;
  opacity: 0.92;
}

.money {
  text-align: right;
  font-weight: 500;
  letter-spacing: 0;
}

.dash {
  color: #9e9e9e;
}

.acts {
  padding: 0 0 0 6px;
}

.inv-table .acts {
  padding-left: 5px;
}

.icon-btn {
  display: inline-flex;
  width: 40px;
  justify-content: center;
  vertical-align: middle;
}

.icon-btn svg {
  width: 20px;
  height: 20px;
}

.eye {
  fill: #555;
}

.mail {
  fill: #2f6fdc;
}

.more-wrap {
  display: flex;
  justify-content: center;
  margin-top: 7.500px;
}

.more {
  width: 127px;
  height: 35px;
  display: flex;
  align-items: center;
  justify-content: center;
  gap: 6px;
  background: #f5f5f4;
  border: 1px solid #ededed;
  border-radius: 4px;
  font: 400 12px Roboto, sans-serif;
  letter-spacing: 0.300px;
  color: #555;
}

.more svg {
  width: 16px;
  height: 16px;
  fill: #555;
}

.next-card {
  margin-top: 25px;
  height: 120px;
}
</style>
